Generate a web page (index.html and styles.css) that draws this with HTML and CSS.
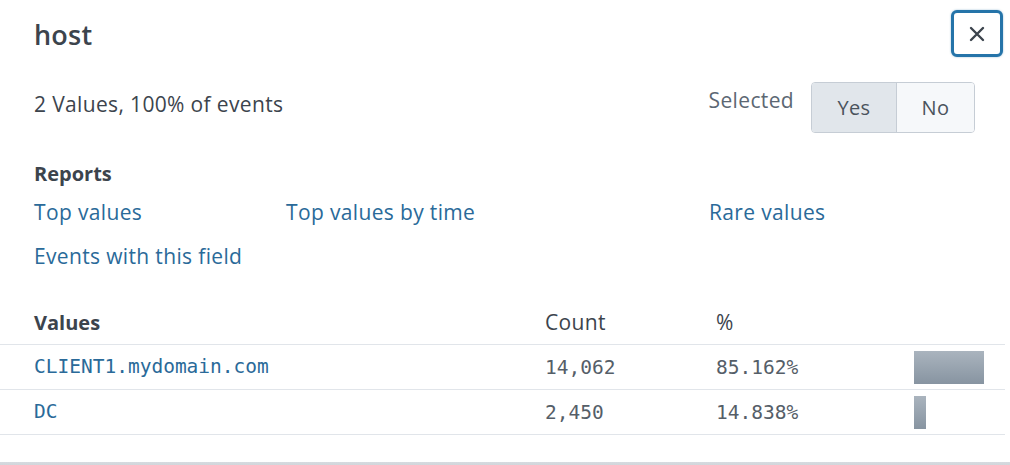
FILE: index.html
```html
<!DOCTYPE html>
<html>
<head>
<meta charset="utf-8">
<link rel="stylesheet" href="styles.css">
</head>
<body>
<div class="panel">
  <div class="head">
    <h1 class="title">host</h1>
    <button class="close" aria-label="Close">
      <svg width="16" height="16" viewBox="0 0 16 16"><path d="M2 2 L14 14 M14 2 L2 14" stroke="#3c444d" stroke-width="2.4" stroke-linecap="round" fill="none"/></svg>
    </button>
  </div>
  <div class="summary">
    <div class="count-text">2 Values, 100% of events</div>
    <div class="selected">
      <span class="sel-label">Selected</span>
      <div class="toggle">
        <span class="opt opt-yes">Yes</span>
        <span class="opt opt-no">No</span>
      </div>
    </div>
  </div>
  <div class="reports">
    <div class="reports-title">Reports</div>
    <div class="links">
      <a class="link">Top values</a>
      <a class="link">Top values by time</a>
      <a class="link">Rare values</a>
      <a class="link">Events with this field</a>
    </div>
  </div>
  <table class="values">
    <thead>
      <tr>
        <th class="c-val">Values</th>
        <th class="c-cnt">Count</th>
        <th class="c-pct">%</th>
        <th class="c-bar"></th>
      </tr>
    </thead>
    <tbody>
      <tr>
        <td class="c-val"><a class="mono link">CLIENT1.mydomain.com</a></td>
        <td class="c-cnt mono">14,062</td>
        <td class="c-pct mono">85.162%</td>
        <td class="c-bar"><div class="track"><div class="bar" style="width:85.162%"></div></div></td>
      </tr>
      <tr>
        <td class="c-val"><a class="mono link">DC</a></td>
        <td class="c-cnt mono">2,450</td>
        <td class="c-pct mono">14.838%</td>
        <td class="c-bar"><div class="track"><div class="bar" style="width:14.838%"></div></div></td>
      </tr>
    </tbody>
  </table>
  <div class="footer-band"></div>
</div>
</body>
</html>
```
FILE: styles.css
```css
html, body {
  margin: 0;
  padding: 0;
  background: #ffffff;
  overflow: hidden;
}
body {
  width: 1010px;
  height: 465px;
  font-family: "Open Sans", "Liberation Sans", sans-serif;
  font-size: 21px;
  letter-spacing: 0.35px;
  color: #3c444d;
}
.panel {
  display: flex;
  flex-direction: column;
}
.head {
  display: flex;
  justify-content: space-between;
  align-items: center;
  padding: 10px 7px 0 34px;
  height: 47px;
}
.title {
  margin: 0;
  font-size: 27px;
  font-weight: 600;
  line-height: 47px;
  color: #3c444d;
  margin-top: 2px;
  letter-spacing: 0.2px;
}
.close {
  width: 52px;
  height: 47px;
  box-sizing: border-box;
  border: 3px solid #2574a9;
  border-radius: 6px;
  background: #ffffff;
  display: flex;
  align-items: center;
  justify-content: center;
  padding: 0;
  box-shadow: 0 0 2px rgba(37,116,169,0.5);
}
.summary {
  display: flex;
  justify-content: space-between;
  align-items: flex-start;
  margin-top: 25px;
  padding: 0 35px 0 34px;
  height: 51px;
}
.count-text {
  line-height: 44px;
}
.selected {
  display: flex;
  align-items: flex-start;
  gap: 17px;
}
.sel-label {
  line-height: 36px;
  color: #5c6773;
}
.toggle {
  display: flex;
  height: 51px;
  box-sizing: border-box;
  border: 1px solid #c6cdd5;
  border-radius: 4px;
  overflow: hidden;
}
.opt {
  display: flex;
  align-items: center;
  justify-content: center;
  color: #4a535c;
  font-size: 20px;
}
.opt-yes {
  width: 84px;
  background: #e1e6eb;
  border-right: 1px solid #c6cdd5;
}
.opt-no {
  width: 77px;
  background: #f6f8fa;
}
.reports {
  margin-top: 26px;
  padding-left: 34px;
}
.reports-title {
  font-weight: 700;
  line-height: 30px;
  font-size: 20px;
  letter-spacing: 0;
}
.links {
  display: grid;
  grid-template-columns: 252px 423px auto;
  margin-top: 1px;
}
.link {
  color: #2a6a99;
  line-height: 44px;
  text-decoration: none;
}
.values {
  margin-top: 22px;
  width: 1005px;
  border-collapse: collapse;
  table-layout: fixed;
}
.values th {
  height: 44px;
  text-align: left;
  font-weight: 400;
  padding: 0;
  border-bottom: 1px solid #e1e5ea;
}
.values th.c-val {
  font-weight: 700;
  font-size: 20px;
  letter-spacing: 0;
}
.values td {
  height: 44px;
  padding: 0;
  border-bottom: 1px solid #e1e5ea;
  vertical-align: middle;
}
.c-val {
  width: 511px;
  padding-left: 34px !important;
}
.c-cnt {
  width: 171px;
}
.c-pct {
  width: 198px;
}
.c-bar {
  width: 91px;
}
.mono {
  font-family: "DejaVu Sans Mono", "Liberation Mono", monospace;
  font-size: 19.5px;
  letter-spacing: 0;
}
td.mono {
  color: #555e68;
}
.track {
  width: 82px;
  height: 33px;
}
.bar {
  height: 33px;
  background: linear-gradient(#aab4be, #8794a1);
}
.footer-band {
  margin-top: 27px;
  height: 10px;
  background: linear-gradient(#d6dadf, #c8cdd2);
}
```
